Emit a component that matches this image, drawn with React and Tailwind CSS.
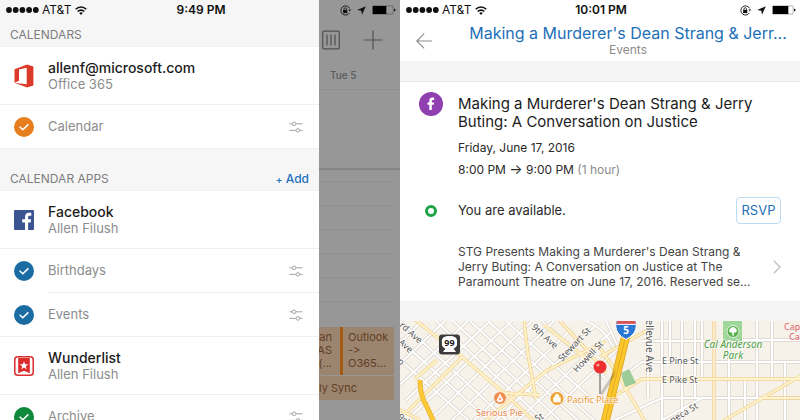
import { useState } from 'react';
import clsx from 'clsx';

const calendarAccount = {
  name: 'allenf@microsoft.com',
  detail: 'Office 365',
  icon: <OfficeLogo />,
  calendars: [{ name: 'Calendar', color: 'bg-[#e67e1e]' }],
};

const appAccounts = [
  {
    name: 'Facebook',
    detail: 'Allen Filush',
    icon: <FacebookLogo />,
    calendars: [
      { name: 'Birthdays', color: 'bg-[#1b6ca3]' },
      { name: 'Events', color: 'bg-[#1b6ca3]' },
    ],
  },
  {
    name: 'Wunderlist',
    detail: 'Allen Filush',
    icon: <WunderlistLogo />,
    calendars: [{ name: 'Archive', color: 'bg-[#0f8a3c]' }],
  },
];

function OfficeLogo() {
  return (
    <svg viewBox="0 0 20 24" className="w-5 h-6" aria-hidden="true">
      <path
        fillRule="evenodd"
        fill="#dc3a2b"
        d="M0.5 5.2 L13 0.6 L19.4 2.4 V21.4 L13 23.4 L0.5 18.8 L12.7 20.2 V3.8 L5 5.6 V16.8 L0.5 18.8 Z"
      />
    </svg>
  );
}

function FacebookLogo() {
  return (
    <svg viewBox="0 0 20 20" className="size-5" aria-hidden="true">
      <rect width="20" height="20" rx="1" fill="#3b5593" />
      <path
        fill="#fff"
        d="M11 20 V12.4 H8.2 V9.3 H11 V7 C11 4.3 12.6 2.8 15 2.8 C16.1 2.8 17 2.9 17.3 2.9 V5.7 H15.7 C14.4 5.7 14.1 6.3 14.1 7.3 V9.3 H17.1 L16.7 12.4 H14.1 V20 Z"
      />
    </svg>
  );
}

function WunderlistLogo() {
  return (
    <svg viewBox="0 0 20 20" className="size-5" aria-hidden="true">
      <rect x="0.8" y="0.8" width="18.4" height="18.4" rx="3" fill="#fff" stroke="#dc2c2c" strokeWidth="1.5" />
      <path fill="#dc2c2c" d="M4.2 2 H15.8 V17.2 L10 14.8 L4.2 17.2 Z" />
      <path
        fill="#fff"
        d="M10 5.2 L11.1 8.2 L14.2 8.3 L11.8 10.2 L12.6 13.2 L10 11.5 L7.4 13.2 L8.2 10.2 L5.8 8.3 L8.9 8.2 Z"
      />
    </svg>
  );
}

function SlidersIcon() {
  return (
    <svg viewBox="0 0 14 12" className="w-3.5 h-3" fill="none" stroke="#a3a3a3" strokeWidth="1" aria-hidden="true">
      <path d="M0.5 2.8 H3.2 M7 2.8 H13.5 M0.5 9.4 H6.9 M10.8 9.4 H13.5" />
      <circle cx="5.1" cy="2.8" r="1.8" />
      <circle cx="8.9" cy="9.4" r="1.8" />
    </svg>
  );
}

function StatusBar({ time, className, batteryFill }) {
  return (
    <div className={clsx('grid grid-cols-3 items-center h-5 pl-1.5 pr-1 text-xs text-[#111]', className)}>
      <div className="flex items-center">
        <svg viewBox="0 0 34 6" className="w-[34px] h-1.5" aria-hidden="true">
          {[3, 9.7, 16.4, 23.1, 29.8].map((x) => (
            <circle key={x} cx={x} cy="3" r="2.9" fill="#111" />
          ))}
        </svg>
        <span className="ml-0.5">AT&amp;T</span>
        <svg viewBox="0 0 12 9" className="ml-1 w-3 h-[9px]" fill="none" stroke="#111" strokeWidth="1.6" aria-hidden="true">
          <path d="M0.7 3.3 C3.7 0.2 8.3 0.2 11.3 3.3" />
          <path d="M2.7 5.5 C4.6 3.6 7.4 3.6 9.3 5.5" />
          <path d="M6 8.9 L4.2 7 C5.2 6.1 6.8 6.1 7.8 7 Z" fill="#111" stroke="none" />
        </svg>
      </div>
      <span className="text-center font-semibold">{time}</span>
      <div className="flex items-center justify-end gap-1.5">
        <svg viewBox="0 0 11 11" className="size-[11px]" fill="none" stroke="#111" aria-hidden="true">
          <path d="M9.6 3.4 A4.6 4.6 0 1 0 9.4 7.9" strokeWidth="0.9" />
          <path d="M8.5 4.6 H11 L9.8 6.4 Z" fill="#111" stroke="none" />
          <rect x="3.1" y="4.9" width="4.2" height="3.2" fill="#111" stroke="none" />
          <path d="M4 5 V3.9 A1.2 1.2 0 0 1 6.4 3.9 V5" strokeWidth="0.8" />
        </svg>
        <svg viewBox="0 0 9 9" className="size-[9px]" aria-hidden="true">
          <path d="M8.8 0.2 L5 8.8 L4.3 4.7 L0.2 4 Z" fill="#111" />
        </svg>
        <svg viewBox="0 0 24 10" className="w-6 h-2.5" aria-hidden="true">
          <rect x="0.5" y="0.9" width="20.6" height="8.2" rx="1" fill="none" stroke="#111" strokeOpacity="0.45" strokeWidth="0.7" />
          <rect x="0.8" y="1" width={batteryFill} height="8" fill="#000" />
          <path d="M22 3.4 L23.4 4.2 V5.8 L22 6.6 Z" fill="#111" />
        </svg>
      </div>
    </div>
  );
}

function AccountRow({ account }) {
  return (
    <div className="flex items-center h-[58px] pl-3.5 border-b border-[#f0f0f0]">
      <span className="flex justify-center w-5 shrink-0">{account.icon}</span>
      <div className="ml-3.5">
        <p className="text-sm leading-[17px] font-medium text-[#1c1c1c]">{account.name}</p>
        <p className="text-[13px] leading-[17px] text-[#8c8c8c]">{account.detail}</p>
      </div>
    </div>
  );
}

function CalendarRow({ calendar, last }) {
  const [checked, setChecked] = useState(true);

  // the divider is inset under the label unless the row closes its group
  return (
    <div className={clsx('flex h-11 pl-3.5 border-[#f0f0f0]', last && 'border-b')}>
      <label className="flex items-center flex-1">
        <span className="grid place-items-center size-5">
          <input
            type="checkbox"
            checked={checked}
            onChange={(e) => setChecked(e.target.checked)}
            className={clsx('appearance-none size-5 rounded-full col-start-1 row-start-1', calendar.color)}
          />
          {checked && (
            <svg viewBox="0 0 20 20" className="size-5 col-start-1 row-start-1 pointer-events-none" aria-hidden="true">
              <path d="M5.6 9.8 L8.8 12.8 L14.4 7.4" fill="none" stroke="#fff" strokeWidth="1.5" />
            </svg>
          )}
        </span>
        <span
          className={clsx(
            'flex items-center self-stretch flex-1 ml-3.5 text-[13px] text-[#8c8c8c] border-[#f0f0f0]',
            !last && 'border-b'
          )}
        >
          {calendar.name}
        </span>
      </label>
      <div className={clsx('flex items-center pr-4 border-[#f0f0f0]', !last && 'border-b')}>
        <button type="button" aria-label={`${calendar.name} settings`}>
          <SlidersIcon />
        </button>
      </div>
    </div>
  );
}

function AccountGroup({ account }) {
  return (
    <section>
      <AccountRow account={account} />
      {account.calendars.map((calendar, i) => (
        <CalendarRow key={calendar.name} calendar={calendar} last={i === account.calendars.length - 1} />
      ))}
    </section>
  );
}

function Drawer() {
  return (
    <div className="w-[319px] shrink-0 bg-white">
      <h2 className="flex items-end h-[47px] px-2.5 pb-[3px] bg-[#f6f6f6] border-b border-[#f1f1f1] text-xs text-[#7d7d7d]">
        CALENDARS
      </h2>
      <AccountGroup account={calendarAccount} />
      <div className="flex items-end justify-between h-[42px] px-2.5 pb-[3px] bg-[#f6f6f6] border-b border-[#f1f1f1] text-xs">
        <h2 className="text-[#7d7d7d]">CALENDAR APPS</h2>
        <button type="button" className="font-medium text-[#1a70bd]">
          <span className="text-[10px]">+</span> Add
        </button>
      </div>
      {appAccounts.map((account) => (
        <AccountGroup key={account.name} account={account} />
      ))}
    </div>
  );
}

function DimmedWeek() {
  return (
    <div className="flex flex-col flex-1 min-w-0 pt-5 bg-[#979797] overflow-hidden">
      <div className="flex items-center justify-between h-10 pl-[3px] pr-[17px]">
        <svg viewBox="0 0 18 20" className="w-[18px] h-5" fill="none" stroke="#505050" aria-hidden="true">
          <rect x="0.7" y="1.2" width="16.6" height="17.6" rx="1" strokeWidth="1.2" />
          <path d="M5 4.6 V15.4 M9 4.6 V15.4 M13 4.6 V15.4" strokeWidth="1.2" />
        </svg>
        <svg viewBox="0 0 20 20" className="size-5" fill="none" stroke="#505050" strokeWidth="1.2" aria-hidden="true">
          <path d="M10 0.5 V19.5 M0.5 10 H19.5" />
        </svg>
      </div>
      <div className="flex items-center h-[30px] pl-[11px] pt-0.5 border-b border-[#8e8e8e] text-[10px] font-medium text-[#5c5c5c]">
        Tue 5
      </div>
      <div className="h-20 border-b-2 border-[#858585]" />
      <div className="pr-1.5">
        {[0, 1, 2, 3, 4, 5].map((hour) => (
          <div key={hour} className={clsx('border-b border-[#8f8f8f]', hour === 0 ? 'h-3' : 'h-6')} />
        ))}
        <div className="h-[25px]" />
        <div className="flex h-12 bg-[#9b8470] text-[11px] leading-[13px] text-[#63401f]">
          <div className="flex justify-end w-[21px] shrink-0 pt-1 pr-2">
            <p className="shrink-0 text-right whitespace-nowrap">
              an<br />AS<br />(...
            </p>
          </div>
          <p className="flex-1 border-l-3 border-[#a55a10] pl-[5px] pt-1 [font-feature-settings:'calt'_0]">
            Outlook<br />-&gt;<br />O365...
          </p>
        </div>
        <div className="flex items-center h-6 mt-px bg-[#9b8470] text-[11px] text-[#63401f]">
          <div className="flex justify-end w-[38px]">
            <p className="shrink-0 whitespace-nowrap">kly Sync</p>
          </div>
        </div>
      </div>
    </div>
  );
}

const minorStreets = [
  // avenues running down to the right
  'M-10 30 L75 105', 'M-10 10 L95 105', 'M0 0 L113 105', 'M36 0 L150 105', 'M53 0 L166 105',
  'M70 0 L184 105', 'M88 0 L200 105', 'M106 0 L196 82', 'M142 0 L206 58',
  // streets running up to the right
  'M-10 32 L22 0', 'M-10 52 L45 0', 'M-10 73 L68 0', 'M5 80 L90 0', 'M12 94 L112 0', 'M24 105 L132 0',
  'M46 105 L154 0', 'M68 105 L172 8', 'M90 105 L196 4', 'M112 105 L212 10', 'M136 105 L222 24',
  // east side
  'M186 0 Q206 8 214 28', 'M206 0 Q212 12 218 26', 'M248 0 V77', 'M262 0 V99', 'M270 0 V36', 'M282 0 V99', 'M295 0 V77',
  'M302 0 V60', 'M357 0 V99', 'M372 0 V58', 'M385 41 V99', 'M230 50 L242 41 H400', 'M262 99 L302 77 H400',
  'M242 20 H320', 'M342 19 H400', 'M215 99 L262 77 H300', 'M345 58 V99', 'M329 19 V99',
];

const mainStreets = [
  'M14 -2 L62 36 L104 72 L136 102', 'M124 -2 L128 34 L136 78', 'M62 36 L8 90', 'M37 39 L15 58',
  'M86 99 L146 50 L206 20', 'M158 -2 L186 28 L206 52', 'M-2 88 L20 99', 'M104 72 L140 74', 'M200 36 L246 10',
  'M198 24 L218 54 L246 102', 'M213 76 L242 58 H400', 'M323 100 L402 54', 'M360 77 H400', 'M144 4 L190 40',
];

const mapLabels = [
  { text: 'rd Ave', x: -1, y: 5, angle: 42 },
  { text: 'Ave', x: -2, y: 22, angle: 42 },
  { text: 'p', x: -3, y: 41, angle: 42 },
  { text: '9sk', x: -3, y: 97, angle: 38 },
  { text: '9th Ave', x: 131, y: 7, angle: 42 },
  { text: 'Stewart St', x: 162, y: 41, angle: -47 },
  { text: 'Howell St', x: 177, y: 52, angle: -47 },
  { text: 'Bellevue Ave', x: 246, y: -8, angle: 90, size: 10 },
  { text: 'E Pine St', x: 262, y: 43, angle: 0 },
  { text: 'E Pike St', x: 262, y: 62, angle: 0 },
  { text: 'eneca St', x: 268, y: 105, angle: -31 },
  { text: 'St', x: 137, y: 101, angle: -30 },
];

function VenueMap() {
  return (
    <svg
      viewBox="0 0 400 99"
      preserveAspectRatio="xMidYMin slice"
      className="block flex-1 w-full min-h-0 bg-[#f7f2e9] font-['Noto_Sans',sans-serif]"
      role="img"
      aria-label="Map of the venue"
    >
      <rect width="400" height="99" fill="#f7f2e9" />
      <rect x="323" y="-1" width="19" height="21" fill="#9fd69a" />
      <g fill="none" strokeLinejoin="round">
        {minorStreets.map((d) => <path key={d} d={d} stroke="#d8d3cb" strokeWidth="3.4" />)}
        {minorStreets.map((d) => <path key={d} d={d} stroke="#fff" strokeWidth="2" />)}
        <path d="M314 -2 V101" stroke="#f6d9ae" strokeWidth="4" />
        <path d="M314 -2 V101" stroke="#fcebc9" strokeWidth="2" />
        {mainStreets.map((d) => <path key={d} d={d} stroke="#f1d391" strokeWidth="3.4" />)}
        {mainStreets.map((d) => <path key={d} d={d} stroke="#fff4cd" strokeWidth="1.8" />)}
        <path d="M20 59 Q20 74 26 84 L34 101" stroke="#e6ae35" strokeWidth="5" />
        <path d="M20 59 Q20 74 26 84 L34 101" stroke="#fbc935" strokeWidth="3.6" />
      </g>
      <path d="M221 52 L229 48 L236 62 L225 66 Z" fill="#9ccb97" />
      <path d="M226 14 L213 68 L205 101" stroke="#dfa62b" strokeWidth="9" fill="none" />
      <path d="M226 14 L213 68 L205 101" stroke="#f9c62c" strokeWidth="7.4" fill="none" />
      <path d="M226 14 L213 68 L205 101" stroke="#e9ad20" strokeWidth="1" fill="none" />
      <path d="M200 72 L216 48 L214 56 L202 75 Z" fill="#000" fillOpacity="0.18" />

      <g fill="#555" stroke="#fff" strokeWidth="1.6" strokeOpacity="0.8" paintOrder="stroke">
        {mapLabels.map(({ text, x, y, angle, size = 9 }) => (
          <text key={text + x} fontSize={size} transform={`translate(${x} ${y}) rotate(${angle})`}>{text}</text>
        ))}
      </g>

      {/* state route 99 */}
      <rect x="39" y="13.5" width="21" height="20" rx="3" fill="#3c3c3c" />
      <path d="M42 22 C41 16 45 15 49.5 15 C54 15 58 16 57 22 C57.5 26 55 27 53.5 27.5 L56 31 H43 L45.5 27.5 C44 27 41.5 26 42 22 Z" fill="#fff" />
      <text x="49.5" y="24.5" textAnchor="middle" fontSize="9" fontWeight="700" fill="#222">99</text>

      {/* interstate 5 */}
      <path d="M217 -3 H235 Q238 6 234 12 Q231 16 226 18.5 Q221 16 218 12 Q214 6 217 -3 Z" fill="#2a78d6" stroke="#fff" strokeWidth="1" />
      <path d="M217.4 -3 H234.8 L235.6 3 H216.6 Z" fill="#d8525a" />
      <path d="M216.4 3.4 H235.8" stroke="#fff" strokeWidth="1" />
      <text x="226" y="13" textAnchor="middle" fontSize="10" fontWeight="700" fill="#fff">5</text>

      <circle cx="333" cy="10.5" r="6" fill="#56b14e" stroke="#fff" strokeWidth="0.8" />
      <path d="M332.2 14.6 V11.6 H330.6 A2 2 0 0 1 330 8 A3.2 3.2 0 0 1 336 8 A2 2 0 0 1 335.4 11.6 H333.8 V14.6 Z" fill="#fff" />
      <g fill="#4c9c45" stroke="#fff" strokeWidth="1.4" strokeOpacity="0.8" paintOrder="stroke" fontSize="10" fontStyle="italic" textAnchor="middle">
        <text x="333" y="27">Cal Anderson</text>
        <text x="333" y="38">Park</text>
      </g>
      <g fill="#e0606a" fontSize="9">
        <text x="384" y="9">Cap</text>
        <text x="389" y="19">Ca</text>
      </g>

      <circle cx="100" cy="77" r="6" fill="#ee8f55" />
      <path d="M100 72.5 L103.4 79 A4 4 0 0 1 96.5 79.5 Z" fill="#fff" fillOpacity="0.9" />
      <circle cx="100" cy="78" r="1" fill="#ee8f55" />
      <circle cx="157" cy="77.5" r="6.5" fill="#f0a030" />
      <path d="M153.6 76.2 H160.4 V81 H153.6 Z M155 76 V75 A2 1.8 0 0 1 159 75 V76" fill="#fff" stroke="#fff" strokeWidth="0.6" />
      <g stroke="#fff" strokeWidth="1.6" strokeOpacity="0.8" paintOrder="stroke" fontSize="9">
        <text x="76" y="95" fill="#e8834a">Serious Pie</text>
        <text x="167" y="82" fill="#ec962c">Pacific Place</text>
      </g>

      {/* venue pin */}
      <path d="M200 50 V73" stroke="#8c8c8c" strokeWidth="1.6" />
      <circle cx="200" cy="46" r="6.5" fill="#ee2f2f" />
      <circle cx="198" cy="44" r="1.6" fill="#ff9a94" />
    </svg>
  );
}

function EventScreen() {
  return (
    <div className="flex flex-col flex-1 min-w-0 bg-white">
      <StatusBar time="10:01 PM" batteryFill="15.5" />
      <header className="flex items-center h-[41px] pl-4">
        <button type="button" aria-label="Back" className="shrink-0">
          <svg viewBox="0 0 16 16" className="size-4" fill="none" stroke="#8a8a8a" strokeWidth="1.1" aria-hidden="true">
            <path d="M16 8 H0.8 M8.2 0.6 L0.8 8 L8.2 15.4" />
          </svg>
        </button>
        <div className="flex-1 min-w-0 ml-6 pb-0.5 text-center">
          <h1 className="text-base leading-5 whitespace-nowrap text-[#1c6fb8]">Making a Murderer's Dean Strang &amp; Jerr...</h1>
          <p className="text-xs leading-[14px] text-[#8c8c8c]">Events</p>
        </div>
      </header>
      <div className="h-[21px] shrink-0 bg-[#f5f5f5] border-b border-[#e6e6e6]" />

      <main className="grid grid-cols-[24px_1fr] gap-x-[15px] px-[19px] pt-2.5 pb-3">
        <svg viewBox="0 0 24 24" className="size-6" aria-hidden="true">
          <circle cx="12" cy="12" r="12" fill="#8f3fb0" />
          <path
            fill="#fff"
            d="M10.3 18 V12.8 H8.4 V10.5 H10.3 V8.8 C10.3 6.7 11.5 5.6 13.4 5.6 C14.2 5.6 14.9 5.7 15.2 5.7 V7.9 H14 C13 7.9 12.8 8.4 12.8 9.1 V10.5 H15.1 L14.8 12.8 H12.8 V18 Z"
          />
        </svg>
        <div>
          <h2 className="text-[15px] leading-[18px] pt-[3px] text-[#1c1c1c]">
            Making a Murderer's Dean Strang &amp; Jerry<br />Buting: A Conversation on Justice
          </h2>
          <p className="mt-2 text-xs leading-[18px] text-[#2a2a2a]">Friday, June 17, 2016</p>
          <p className="h-[18px] mt-1 text-xs leading-[18px] text-[#2a2a2a]">
            8:00 PM <span className="text-sm leading-none">→</span> 9:00 PM <span className="text-[#8c8c8c]">(1 hour)</span>
          </p>
        </div>

        <span className="flex items-center justify-center mt-[18px]">
          <span className="size-3 rounded-full border-3 border-[#1ea446]" />
        </span>
        <div className="flex items-center justify-between mt-[18px]">
          <p className="text-[13px] text-[#2a2a2a]">You are available.</p>
          <button type="button" className="w-[45px] h-[27px] rounded-sm border border-[#b9dcf3] text-[13px] text-[#1c6fb8]">
            RSVP
          </button>
        </div>

        <a href="#details" className="flex items-center justify-between col-start-2 mt-5">
          <span className="text-xs leading-[15px] text-[#444]">
            STG Presents Making a Murderer's Dean Strang &amp;<br />
            Jerry Buting: A Conversation on Justice at The<br />
            Paramount Theatre on June 17, 2016. Reserved se...
          </span>
          <svg viewBox="0 0 8 14" className="w-2 h-3.5 shrink-0" fill="none" stroke="#c0c0c0" strokeWidth="1.4" aria-hidden="true">
            <path d="M0.8 0.8 L7 7 L0.8 13.2" />
          </svg>
        </a>
      </main>

      <div className="h-5 shrink-0 bg-[#f5f5f5] border-t border-[#f0f0f0]" />
      <VenueMap />
    </div>
  );
}

function App() {
  return (
    <div className="flex h-screen overflow-hidden font-[Inter,sans-serif]">
      <div className="relative flex flex-1 min-w-0">
        <Drawer />
        <DimmedWeek />
        <StatusBar time="9:49 PM" batteryFill="13.5" className="absolute inset-x-0 top-0" />
      </div>
      <EventScreen />
    </div>
  );
}

export default App;
